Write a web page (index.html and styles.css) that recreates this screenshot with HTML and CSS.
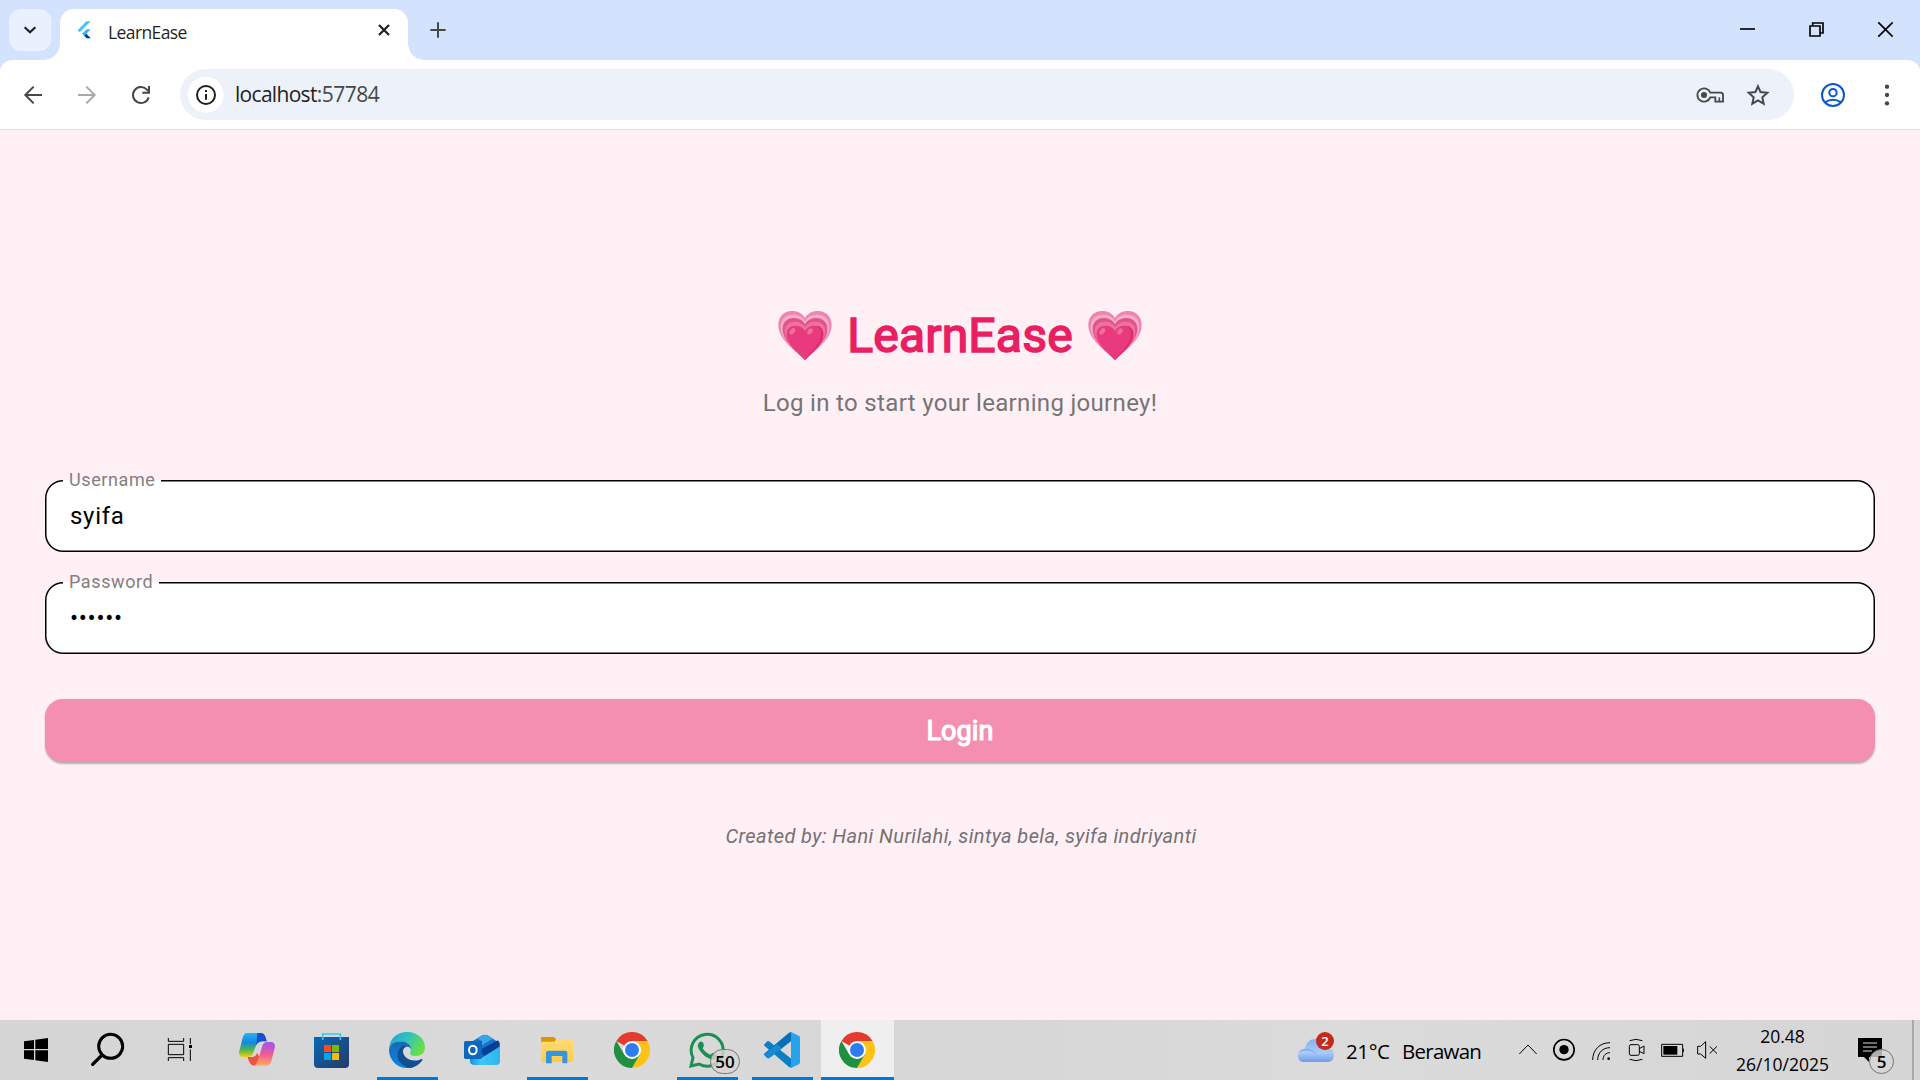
FILE: index.html
```html
<!DOCTYPE html>
<html lang="en">
<head>
<meta charset="utf-8">
<title>LearnEase</title>
<link rel="stylesheet" href="styles.css">
</head>
<body>
<svg class="defs" width="0" height="0">
  <defs>
    <linearGradient id="store" x1="0" y1="0" x2="1" y2="1"><stop offset="0" stop-color="#0669b4"/><stop offset="1" stop-color="#263a66"/></linearGradient>
    <linearGradient id="edgeTop" x1="0" y1="0" x2="1" y2=".5"><stop offset="0" stop-color="#1f9fdc"/><stop offset=".5" stop-color="#2fc3bb"/><stop offset="1" stop-color="#66e04a"/></linearGradient>
    <linearGradient id="edgeLeft" x1="0" y1="0" x2="0" y2="1"><stop offset="0" stop-color="#1769b5"/><stop offset="1" stop-color="#0d86e0"/></linearGradient>
    <linearGradient id="copA" x1="0" y1="0" x2="0" y2="1"><stop offset="0" stop-color="#25b3f5"/><stop offset=".4" stop-color="#1189dd"/><stop offset=".7" stop-color="#4fb64c"/><stop offset="1" stop-color="#f5cf0b"/></linearGradient>
    <linearGradient id="copB" x1=".4" y1="0" x2=".3" y2="1"><stop offset="0" stop-color="#a653e8"/><stop offset=".5" stop-color="#ec5c96"/><stop offset="1" stop-color="#fdb05c"/></linearGradient>
    <linearGradient id="outl" x1="0" y1="0" x2="1" y2="0"><stop offset="0" stop-color="#1590e0"/><stop offset=".35" stop-color="#3dc8f6"/><stop offset="1" stop-color="#2db5ee"/></linearGradient>
    <linearGradient id="folder" x1="0" y1="0" x2="0" y2="1"><stop offset="0" stop-color="#ffdc77"/><stop offset="1" stop-color="#ffcb44"/></linearGradient>
    <linearGradient id="cloud" x1="0" y1="0" x2="0" y2="1"><stop offset="0" stop-color="#84b2f0"/><stop offset=".6" stop-color="#a9cbf8"/><stop offset="1" stop-color="#6f9ce8"/></linearGradient>
    <symbol id="heart" viewBox="0 0 160 147">
      <path d="M80 147C48 116 0 86 0 42C0 17 17 0 41 0C59 0 73 8 80 21C87 8 101 0 119 0C143 0 160 17 160 42C160 86 112 116 80 147Z" fill="#ed87ae"/>
      <path d="M80 147C50 117 7 88 7 49C7 25 22 11 43 11C61 11 74 19 80 31C86 19 99 11 117 11C138 11 153 25 153 49C153 88 110 117 80 147Z" fill="#f6adca"/>
      <path d="M80 147C52 118 13 91 13 54C13 33 27 21 46 21C62 21 74 28 80 40C86 28 98 21 114 21C133 21 147 33 147 54C147 91 108 118 80 147Z" fill="#e4528a"/>
      <path d="M80 147C54 120 19 94 19 60C19 42 31 32 49 32C64 32 74 38 80 48C86 38 96 32 111 32C129 32 141 42 141 60C141 94 106 120 80 147Z" fill="#e9739f"/>
      <path d="M80 147C56 122 25 100 25 70C25 53 36 44 51 44C65 44 75 50 80 60C85 50 95 44 109 44C124 44 135 53 135 70C135 100 104 122 80 147Z" fill="#e83a7d"/>
      <path d="M111 44C126 44 135 53 135 70C135 100 104 122 80 147C102 116 128 98 128 70C128 55 123 48 111 44Z" fill="#d92d70"/>
      <ellipse cx="42" cy="61" rx="7" ry="11" transform="rotate(38 42 61)" fill="#ef6e9f"/>
      <ellipse cx="95" cy="61" rx="7" ry="10" transform="rotate(38 95 61)" fill="#ef6e9f"/>
    </symbol>
    <symbol id="chrome" viewBox="0 0 108 108">
      <path d="M54 54L7.200 27A54 54 0 0 1 100.800 27Z" fill="#e33b2e"/>
      <path d="M54 27H100.800A54 54 0 0 1 54 108L77 67Z" fill="#fdc316"/>
      <path d="M7.200 27L31 67.500L54 81L77.400 67.500L54 108A54 54 0 0 1 7.200 27Z" fill="#1f9041"/>
      <circle cx="54" cy="54" r="27" fill="#fff"/><circle cx="54" cy="54" r="21" fill="#2f7cf0"/>
    </symbol>
  </defs>
</svg>

<header class="tabstrip">
  <svg class="tab-search" width="60" height="60" viewBox="0 0 180 180"><rect x="27" y="27" width="127" height="126" rx="36" fill="#eaf1fe"/><path d="M74 82L90 97L106 82" fill="none" stroke="#1f1f1f" stroke-width="6.500"/></svg>
  <div class="tab">
    <svg width="18" height="20" viewBox="230 60 48 60"><path d="M232 91L258 64H271L238 97Z" fill="#42c4f8"/><path d="M245 101L259 88H271L258 101L271 115H259Z" fill="#35b4f4"/><path d="M252 107L258 101L271 115H259Z" fill="#0c3f94"/></svg>
    <span class="tab-title">LearnEase</span>
    <svg class="tab-close" width="20" height="20" viewBox="1122 60 60 60"><path d="M1137 75L1167 105M1167 75L1137 105" stroke="#1f1f1f" stroke-width="6.500"/></svg>
  </div>
  <svg width="60" height="60" viewBox="1224 0 180 180"><path d="M1314 67V113M1291 90H1337" stroke="#474747" stroke-width="6"/></svg>
  <div class="window-controls">
    <svg width="68" height="60" viewBox="342 0 204 180"><path d="M420 87H465" stroke="#000" stroke-width="5"/></svg>
    <svg width="69" height="60" viewBox="546 0 207 180"><path d="M630 78H660V108H630ZM638 77V69H669V99H661" fill="none" stroke="#000" stroke-width="5"/></svg>
    <svg width="69" height="60" viewBox="753 0 207 180"><path d="M835 67L878 110M878 67L835 110" stroke="#000" stroke-width="5"/></svg>
  </div>
</header>

<nav class="toolbar">
  <svg width="60" height="69" viewBox="0 180 180 207"><path d="M126 285H79M101 260L76 285L101 310" fill="none" stroke="#474747" stroke-width="6"/></svg>
  <svg width="54" height="69" viewBox="180 180 162 207"><path d="M234 285H281M259 260L284 285L259 310" fill="none" stroke="#a9a9a9" stroke-width="6"/></svg>
  <svg width="66" height="69" viewBox="342 180 198 207"><path d="M446 292A24 24 0 1 1 440 268L447 275" fill="none" stroke="#474747" stroke-width="6"/><path d="M450 258V281H427V275H444V258Z" fill="#474747"/></svg>
  <div class="omnibox">
    <svg width="51" height="51" viewBox="540 207 153 153"><circle cx="617" cy="284" r="54" fill="#fff"/><circle cx="618" cy="285" r="27" fill="none" stroke="#1f1f1f" stroke-width="6"/><path d="M618 282V299M618 270V276" stroke="#1f1f1f" stroke-width="6"/></svg>
    <span class="url"><span class="host">localhost</span><span class="port">:57784</span></span>
    <svg class="omni-key" width="48" height="51" viewBox="258 207 144 153"><path d="M331 278A20 20 0 1 0 331 292H346V305H369V282L364 278Z" fill="none" stroke="#474747" stroke-width="5.500"/><circle cx="312" cy="285" r="9" fill="#474747"/><path d="M358 305V292" stroke="#474747" stroke-width="5"/></svg>
    <svg width="60" height="51" viewBox="402 207 180 153"><path d="M474 259L481.500 276L502 278L487 292L491 311L474 301L457 311L461 292L446 278L466.500 276Z" fill="none" stroke="#474747" stroke-width="6"/></svg>
  </div>
  <svg width="66" height="69" viewBox="582 180 198 207"><g fill="none" stroke="#0b57d0" stroke-width="6"><circle cx="699" cy="285" r="33"/><circle cx="699" cy="278" r="11"/><path d="M675 307Q699 291 723 307"/></g></svg>
  <svg width="60" height="69" viewBox="780 180 180 207"><g fill="#474747"><circle cx="861" cy="260" r="6.500"/><circle cx="861" cy="285" r="6.500"/><circle cx="861" cy="310" r="6.500"/></g></svg>
</nav>

<main class="page">
  <h1 class="title"><svg width="54" height="49"><use href="#heart"/></svg><span class="title-text">LearnEase</span><svg width="54" height="49"><use href="#heart"/></svg></h1>
  <p class="subtitle">Log in to start your learning journey!</p>
  <div class="field"><span class="field-label">Username</span><span class="field-value">syifa</span></div>
  <div class="field"><span class="field-label label-password">Password</span><span class="field-value">••••••</span></div>
  <div class="login"><span class="login-text">Login</span></div>
  <p class="credit">Created by: Hani Nurilahi, sintya bela, syifa indriyanti</p>
</main>

<footer class="taskbar">
  <div class="apps">
    <svg width="72" height="60" viewBox="0 30 216 180"><path d="M72 94L102 90V117H72ZM106 89L144 84V117H106ZM72 121H102V150L72 146ZM106 121H144V156L106 151Z"/></svg>
    <svg width="72" height="60" viewBox="216 30 216 180"><circle cx="332" cy="109" r="36" fill="none" stroke="#000" stroke-width="9"/><path d="M305 136L278 163" stroke="#000" stroke-width="10" stroke-linecap="round"/></svg>
    <svg width="75" height="60" viewBox="432 30 225 180"><path d="M505 84V94H551V84M505 103H551V134H505ZM505 153V143H551V153M571 84V102M571 118V153" fill="none" stroke="#000" stroke-width="3"/><path d="M567 105H576V114H567Z"/></svg>
    <svg width="75" height="60" viewBox="657 30 225 180"><path d="M741 69H782C792 69 796 76 800 94H788C776 94 771 101 766 112L758 132C755 139 751 141 744 141H730C719 141 715 134 718 123L728 83C731 74 735 69 741 69Z" fill="url(#copA)"/><path d="M772 69H782C792 69 796 76 800 94H788C778 94 773 98 769 105Z" fill="#1a4fcc"/><path d="M743 141H755C763 141 768 137 772 128L778 142L768 167C753 168 747 159 743 141Z" fill="#ef5340"/><path d="M801 96H812C823 96 827 104 824 115L814 153C811 163 806 167 798 167H760C767 166 770 161 774 150L787 108C790 99 795 96 801 96Z" fill="url(#copB)"/></svg>
    <svg width="75" height="60" viewBox="-18 30 225 180"><path d="M42 81H147V162Q147 174 135 174H54Q42 174 42 162Z" fill="url(#store)"/><path d="M68 90V72H121V90" fill="none" stroke="#35c5f5" stroke-width="5"/><path d="M72 105H93V126H72Z" fill="#f25022"/><path d="M96 105H117V126H96Z" fill="#7fba00"/><path d="M72 129H93V150H72Z" fill="#00a4ef"/><path d="M96 129H117V150H96Z" fill="#ffb900"/></svg>
    <div class="app running"><svg width="75" height="60" viewBox="207 30 225 180"><path d="M267 119C268 85 292 66 321 66C353 66 375 87 375 112C375 130 363 138 347 138C334 138 329 133 330 128C337 117 330 95 305 94C285 93 272 104 267 119Z" fill="url(#edgeTop)"/><path d="M267 119C270 102 285 94 304 94C322 95 334 106 333 119C330 109 320 108 313 114C298 130 314 156 340 156C352 156 361 151 367 147C357 164 341 174 321 174C291 174 267 150 267 119Z" fill="url(#edgeLeft)"/><path d="M307 108C291 119 287 143 302 159C309 167 319 173 329 174C346 172 360 161 368 149C367 145 363 147 360 149C333 158 307 143 309 120C310 113 316 109 320 108C316 106 311 106 307 108Z" fill="#114f92"/></svg></div>
    <svg width="75" height="60" viewBox="432 30 225 180"><path d="M510 98L547 76Q555 73 563 76L597 98L599 115L530 153H510Z" fill="#1b72c7"/><path d="M533 86L547 77Q555 73 563 77L578 86L546 106V93Z" fill="#35a7e8"/><path d="M546 116L594 91L599 99V112L552 137L546 133Z" fill="#053f96"/><path d="M510 143L546 145L600 109V153Q600 165 588 165H524Q510 165 510 152Z" fill="url(#outl)"/><rect x="492" y="93" width="54" height="54" rx="5" fill="#0f66bf"/><ellipse cx="518.500" cy="120" rx="11.500" ry="13" fill="none" stroke="#fff" stroke-width="6"/></svg>
    <div class="app running"><svg width="75" height="60" viewBox="657 30 225 180"><path d="M723 84Q723 81 727 81H762L768 87V97H723Z" fill="#dc9700"/><path d="M723 95H763L770 87H815Q819 87 819 91V151Q819 156 814 156H728Q723 156 723 151Z" fill="url(#folder)"/><path d="M738 129Q738 122 745 122H796Q802 122 802 129V160H787V138H755V160H738Z" fill="#3595dc"/></svg></div>
    <div class="app"><svg width="36" height="36"><use href="#chrome"/></svg></div>
    <div class="app running"><svg width="75" height="60" viewBox="207 30 225 180"><path d="M273 168L279 143A48 48 0 1 1 297 162Z" fill="none" stroke="#1c8f57" stroke-width="9"/><path d="M300 95Q308 93 311 102Q314 110 308 115Q317 129 331 134L338 128Q350 131 351 138Q347 149 337 149Q310 143 295 115Q290 102 300 95Z" fill="#1c8f57"/></svg><span class="badge badge-wide">50</span></div>
    <div class="app running"><svg width="75" height="60" viewBox="432 30 225 180"><path d="M492 104L502 94Q505 92 509 95L575 147V173L567 171L494 108Q491 106 492 104Z" fill="#0a7fc8"/><path d="M492 134L502 144Q505 146 509 143L575 92V66L567 68L494 130Q491 132 492 134Z" fill="#066fb5"/><path d="M492 134L530 102L546 115L509 143Q505 146 502 144Z" fill="#168bd3"/><path d="M573 66L596 77Q600 79 600 83V157Q600 161 596 163L573 174Z" fill="#27a3ee"/></svg></div>
    <div class="app running active"><svg width="36" height="36"><use href="#chrome"/></svg></div>
  </div>
  <div class="tray">
    <div class="weather">
      <div class="weather-icon"><svg width="36" height="31" viewBox="54 66 108 93"><path d="M70 156Q54 154 54 137Q54 118 74 116Q80 87 107 87Q132 88 138 112Q162 115 162 136Q161 154 146 156Z" fill="url(#cloud)"/><path d="M57 127Q74 109 99 122Q108 128 110 136Q99 121 82 121Q68 120 57 127Z" fill="#7fa9ee"/></svg><span class="alert">2</span></div>
      <span class="temp">21°C</span><span class="sky">Berawan</span>
    </div>
    <svg width="213" height="60" viewBox="702 30 639 180">
      <g fill="none" stroke="#000" stroke-width="3">
        <path d="M718 132L744 105L770 132"/>
        <circle cx="852" cy="119" r="30.500" stroke-width="5"/>
        <path d="M938 150C938 120 959 98 990 98M953 150C953 128 969 113 990 113M969 150C969 136 978 128 990 128"/>
        <rect x="1048" y="104" width="30" height="32" rx="5"/><path d="M1078 116L1092 108V131L1078 124M1049 92Q1068 84 1087 92M1049 148Q1068 156 1087 148"/>
        <path d="M1145 103H1208V139H1145ZM1210 116V126"/>
        <path d="M1253 109H1262L1277 95V145L1262 132H1253ZM1289 109L1311 131M1311 109L1289 131"/>
      </g>
      <circle cx="852" cy="119" r="14"/><circle cx="986" cy="146" r="4"/><path d="M1150 108H1192V134H1150Z"/>
    </svg>
    <div class="clock"><span>20.48</span><span>26/10/2025</span></div>
    <div class="notice"><svg width="80" height="60" viewBox="702 30 240 180"><path d="M774 84H846V141H807V156L792 141H774Z"/><path d="M789 99H831M789 111H831M789 123H816" stroke="#ddd" stroke-width="3"/></svg><span class="badge badge-round">5</span></div>
    <div class="show-desktop"></div>
  </div>
</footer>
</body>
</html>
```
FILE: styles.css
```css
* { box-sizing: border-box; margin: 0; padding: 0; }
body { width: 1920px; height: 1080px; overflow: hidden; display: flex; flex-direction: column; font-family: "Open Sans", sans-serif; background: #fff0f5; }
svg { display: block; flex: none; }
.defs { position: absolute; }
span { white-space: nowrap; }

.tabstrip { flex: none; height: 60px; display: flex; background: #d3e3fd; position: relative; z-index: 1; }
.tab { width: 348px; height: 51px; margin-top: 9px; padding: 0 14px 9px 16px; display: flex; align-items: center; background: #fff; border-radius: 14px 14px 0 0; position: relative; }
.tab::before, .tab::after { content: ""; position: absolute; bottom: 0; width: 16px; height: 16px; }
.tab::before { left: -16px; background: radial-gradient(circle at 0 0, transparent 15.5px, #fff 16px); }
.tab::after { right: -16px; background: radial-gradient(circle at 100% 0, transparent 15.5px, #fff 16px); }
.tab-title { margin-left: 14px; font-size: 17.5px; letter-spacing: -0.6px; color: #1f1f1f; line-height: 24px; padding-top: 3px; }
.tab-close { margin-left: auto; }
.window-controls { margin-left: auto; display: flex; }

.toolbar { flex: none; height: 70px; display: flex; border-bottom: 1px solid #dcdfe3; background: #fff; border-radius: 12px 12px 0 0; box-shadow: 0 -12px 0 #d3e3fd; }
.omnibox { width: 1614px; height: 51px; margin-top: 9px; display: flex; border-radius: 26px; background: #ecf1fa; }
.url { margin-left: 4px; font-size: 21px; line-height: 51px; color: #474747; }
.host { color: #1f1f1f; letter-spacing: -0.7px; }
.port { letter-spacing: -0.5px; }
.omni-key { margin-left: auto; }

.page { flex: 1; padding: 178px 45px 0; display: flex; flex-direction: column; font-family: Roboto, sans-serif; }
.title { height: 56px; display: flex; justify-content: center; gap: 15.5px; font-weight: 400; padding-top: 3px; }
.title-text { margin-top: -3px; font-size: 48px; line-height: 56px; letter-spacing: 0.2px; color: #e91e63; -webkit-text-stroke: 1.6px #e91e63; }
.subtitle { margin-top: 21px; line-height: 36px; font-size: 24px; letter-spacing: 0.33px; text-align: center; color: #757575; }
.field { position: relative; height: 72px; box-shadow: inset 0 0 0 1.5px #000; border-radius: 18px; background: #fff; padding: 18px 25px; }
.subtitle + .field { margin-top: 59px; }
.field + .field { margin-top: 30px; }
.field-label { position: absolute; left: 18px; top: -11px; width: 98px; height: 22px; padding-left: 6px; font-size: 18px; line-height: 22px; letter-spacing: 0.6px; color: #857e80; background: linear-gradient(#fff0f5 11px, #fff 11px); }
.label-password { width: 96px; }
.field-value { display: block; font-size: 24px; line-height: 36px; letter-spacing: 0.7px; color: #000; }
.login { margin-top: 45px; height: 63px; display: flex; justify-content: center; align-items: center; border-radius: 18px; background: #f48fb1; box-shadow: 0 1.5px 2px rgba(0,0,0,.28); }
.login-text { font-size: 27px; line-height: 36px; letter-spacing: 0.1px; color: #fff; -webkit-text-stroke: 1.2px #fff; }
.credit { margin-top: 59px; padding-left: 2px; line-height: 30px; font-size: 20px; font-style: italic; letter-spacing: 0.4px; text-align: center; color: #757073; }

.taskbar { flex: none; height: 60px; display: flex; justify-content: space-between; background: linear-gradient(90deg, #d5d5d5, #dadada 30%, #d6d6d6 50%, #dbdbdb 70%, #d5d5d5); color: #000; }
.apps, .tray, .weather { display: flex; }
.app { width: 75px; height: 60px; display: flex; align-items: center; justify-content: center; position: relative; }
.running::after { content: ""; position: absolute; left: 8px; bottom: 0; width: 61px; height: 3px; background: #0078d7; }
.active { width: 73px; margin-left: 2px; padding-right: 1px; background: #efefef; }
.active::after { left: 0; width: 73px; }
.badge { position: absolute; border: 1px solid #777; background: rgba(214,214,214,.82); font-weight: 600; font-size: 17px; text-align: center; }
.badge-wide { left: 41px; top: 29px; width: 30px; height: 25px; line-height: 24px; border-radius: 13px; }
.badge-round { left: 35px; top: 29px; width: 25px; height: 25px; line-height: 24px; border-radius: 50%; }
.weather { width: 216px; line-height: 62px; font-size: 20.5px; }
.weather-icon { position: relative; width: 36px; padding-top: 12px; margin-right: 12px; }
.alert { position: absolute; left: 18px; top: 12px; width: 18px; height: 18px; border-radius: 50%; background: #c42b1c; color: #fff; font-size: 13px; font-weight: 600; line-height: 18px; text-align: center; }
.temp { width: 56px; letter-spacing: -0.4px; }
.sky { letter-spacing: -0.75px; }
.clock { width: 107px; padding: 2px 0 0 4px; display: flex; flex-direction: column; align-items: center; font-size: 17.5px; line-height: 28px; }
.notice { position: relative; width: 78px; }
.show-desktop { width: 8px; border-left: 2px solid #a9a9a9; }
```
